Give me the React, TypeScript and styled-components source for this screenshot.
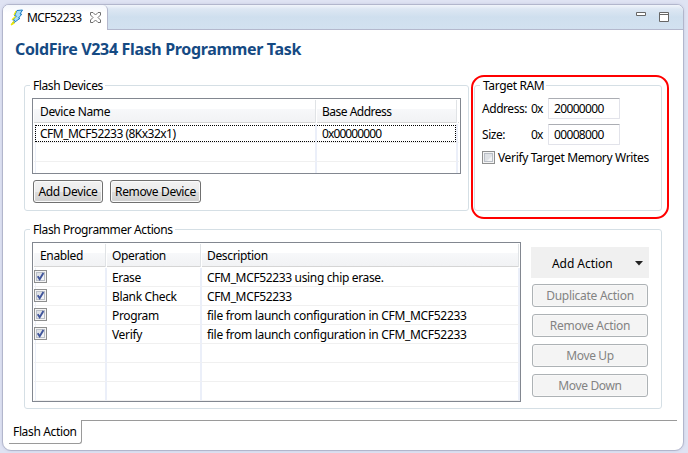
import React from "react";
import styled, { createGlobalStyle } from "styled-components";

const Global = createGlobalStyle`
  *{box-sizing:border-box}
  html,body{margin:0;padding:0}
  body{width:688px;height:453px;overflow:hidden;background:#e0e4f4;font:12px/16px "Noto Sans","Open Sans",sans-serif;color:#000}
`;
const T = styled.span<{ $s?: number }>`
  white-space:pre;letter-spacing:${p => p.$s ?? -0.35}px;
`;
const Page = styled.div`width:688px;height:453px;padding:4px 4px 2px 2px;background:#dfe3f3;`;
const Window = styled.div`
  position:relative;width:682px;height:447px;border:1px solid #b2b6cc;border-radius:7px 7px 9px 9px;background:#fff;overflow:hidden;
  display:flex;flex-direction:column;box-shadow:0 0 3px #c5c9e0;
`;
const TabBar = styled.div`
  height:25px;flex:none;display:flex;border-bottom:1px solid #b4b8cd;
  background:linear-gradient(#f1f5fb 0,#dde7f3 4px,#cfdfee 12px,#d2e1f0 100%);
`;
const Tab = styled.div`
  width:105px;height:25px;background:linear-gradient(#f4f7fc,#fff 8px);border-right:1px solid #b4b8cd;border-radius:0 5px 0 0;
  display:flex;align-items:center;padding:0 0 0 7px;
  svg{flex:none}
`;
const TabName = styled.div`width:65px;padding-left:2px;height:17px;line-height:18px;`;
const WinButtons = styled.div`margin-left:auto;padding:7px 14px 0 0;svg{display:block}`;
const Title = styled.h1`
  margin:0;height:47px;padding:8px 0 0 12px;font-size:16px;line-height:22px;font-weight:700;color:#154a83;
`;
const Row = styled.div<{ $h: number }>`height:${p => p.$h}px;display:flex;flex:none;`;
const Group = styled.fieldset<{ $w: number; $h: number; $ml: number }>`
  margin:0 0 0 ${p => p.$ml}px;padding:0;width:${p => p.$w}px;height:${p => p.$h}px;border:1px solid #d5dfe5;border-radius:3px;min-width:0;flex:none;
`;
const Legend = styled.legend`margin-left:5px;padding:0 2px 0 3px;height:16px;line-height:18px;`;
const Table = styled.div<{ $w: number; $h: number; $cols: string }>`
  width:${p => p.$w}px;height:${p => p.$h}px;border:1px solid #828790;padding:1px 1px 0;flex:none;overflow:hidden;
  display:grid;grid-template-columns:${p => p.$cols};grid-auto-rows:19px;grid-template-rows:24px;
`;
const Head = styled.div<{ $first?: boolean }>`
  margin:0 1px 1px 0;border-right:1px solid #e0e3e6;padding:4px 0 0 ${p => (p.$first ? 6 : 5)}px;
  background:linear-gradient(#fff 0,#fff 9px,#f7f8fa 9px,#f1f2f4 100%);
  box-shadow:1px 0 0 #fff,inset 0 -1px 0 #d5d5d5;
`;
const HeadEnd = styled.div`
  margin-bottom:1px;border-bottom:1px solid #d5d5d5;
`;
const Cell = styled.div<{ $first?: boolean; $flush?: boolean }>`
  border-right:2px solid #ebeff9;border-bottom:1px solid #f0f0f0;padding:2px 0 0 ${p => (p.$flush ? 0 : 5)}px;
  ${p => p.$flush && "padding-top:1px;"}
  ${p => p.$first && "padding:1px 0 0;background:linear-gradient(90deg,transparent 1px,#ebeff9 1px,#ebeff9 2px,transparent 2px);"}
  svg{display:block;margin-top:1px}
`;
const EndCell = styled.div`border-bottom:1px solid #f0f0f0;`;
const Selected = styled.div<{ $end?: boolean }>`
  height:17px;border:1px dotted #000;padding-left:4px;line-height:15px;
  ${p => (p.$end ? "border-left:0;padding-left:5px;" : "border-right:0;margin-left:1px;")}
`;
const Button = styled.div<{ $w: number; $off?: boolean }>`
  width:${p => p.$w}px;height:23px;border:1px solid ${p => (p.$off ? "#adb2b5" : "#707070")};border-radius:3px;
  background:${p => (p.$off ? "#f4f4f4" : "linear-gradient(#f2f2f2 0,#ebebeb 50%,#dddddd 50%,#cfcfcf 100%)")};
  box-shadow:inset 0 0 0 1px ${p => (p.$off ? "#f8f8f8" : "#fafafa")};
  color:${p => (p.$off ? "#838383" : "#000")};display:flex;justify-content:center;align-items:center;flex:none;
`;
const Buttons = styled.div`display:flex;gap:7px;padding:6px 0 0 1px;`;
const Side = styled.div`display:flex;flex-direction:column;align-items:center;gap:7px;width:118px;margin:5px 0 0 10px;`;
const AddAction = styled.div`
  width:118px;height:31px;margin-bottom:-1px;background:#f0f0f0;display:flex;align-items:center;padding:3px 6px 0 21px;justify-content:space-between;
  svg{margin-bottom:2px}
`;
const Field = styled.div`display:grid;grid-template-columns:49px 17px 72px;height:26px;padding-left:7px;line-height:22px;`;
const Input = styled.div`height:21px;border:1px solid #e2e3ea;border-top-color:#abadb3;border-radius:1px;padding-left:5px;line-height:20px;`;
const Check = styled.div`display:flex;gap:3px;padding:0 0 0 7px;margin-top:1px;line-height:14px;svg{flex:none}`;
const Body = styled.div`padding:5px 0 0 7px;`;
const RamBody = styled.div`padding-top:5px;`;
const Callout = styled.div`
  position:absolute;left:468px;top:70px;width:198px;height:144px;border:2px solid #f00;border-radius:13px;
`;
const Footer = styled.div`display:flex;height:24px;margin:11px 6px 0 6px;`;
const PageTab = styled.div`width:73px;height:24px;border:1px solid #9a9a9a;border-top:0;border-left:0;border-radius:0 0 3px 0;padding:4px 0 0 4px;`;
const Line = styled.div`flex:1;border-top:1px solid #9a9a9a;`;

const Box = ({ on }: { on?: boolean }) => (
  <svg width="13" height="13" viewBox="0 0 13 13">
    <rect x=".5" y=".5" width="12" height="12" fill="#f4f4f4" stroke="#8e8f8f" />
    <rect x="2.5" y="2.5" width="8" height="8" fill="#dfe2e6" stroke="#b9bec6" />
    <path d="M5 10h5V5z" fill="#f3f4f5" />
    {on && <path d="M3.700 6.300l2 2.900L9.400 3" fill="none" stroke="#40559b" strokeWidth="1.900" />}
  </svg>
);
const Bolt = () => (
  <svg width="15" height="17" viewBox="0 0 15 17">
    <path d="M7 1.500l5.500-.5-2.500 4 1.800.2-3.300 3.800 1.500.3L1.500 15.500l3.200-4.300-2-.2 3.700-4-1.900-.3z" fill="#a6dcf7" stroke="#1c7cc4" />
    <path d="M6 2L4 6M5.500 7.500L2 10.800M4 12L1 16l3.500-2" fill="none" stroke="#f0ea00" strokeWidth="1.200" />
  </svg>
);

const actions = [
  ["Erase", "CFM_MCF52233 using chip erase."],
  ["Blank Check", "CFM_MCF52233"],
  ["Program", "file from launch configuration in CFM_MCF52233"],
  ["Verify", "file from launch configuration in CFM_MCF52233"],
  ["", ""], ["", ""], ["", ""],
];

export default function App() {
  return (
    <Page>
      <Global />
      <Window>
        <TabBar>
          <Tab>
            <Bolt />
            <TabName><T $s={-0.55}>MCF52233</T></TabName>
            <svg width="11" height="11" viewBox="0 0 11 11">
              <path d="M.5.5h2.500L5.500 3 8 .5h2.500V3L8 5.500 10.500 8v2.500H8L5.500 8 3 10.500H.5V8L3 5.500.5 3z" fill="#fff" stroke="#707070" />
            </svg>
          </Tab>
          <WinButtons>
            <svg width="33" height="11" viewBox="0 0 33 11">
              <path d="M.5.5h9v3h-9zM23.500.5h9v9h-9zM23.500 2.500h9" fill="#fff" stroke="#666" />
            </svg>
          </WinButtons>
        </TabBar>
        <Title><T $s={-0.34}>ColdFire V234 Flash Programmer Task</T></Title>
        <Row $h={144}>
          <Group $w={445} $h={134} $ml={21}>
            <Legend><T $s={-0.4}>Flash Devices</T></Legend>
            <Body>
              <Table $w={429} $h={76} $cols="283px 141px 1fr">
                <Head $first><T>Device Name</T></Head><Head><T $s={-0.5}>Base Address</T></Head><HeadEnd />
                <Cell $first><Selected><T $s={-0.52}>CFM_MCF52233 (8Kx32x1)</T></Selected></Cell>
                <Cell $flush><Selected $end><T $s={-0.9}>0x00000000</T></Selected></Cell><EndCell />
                <Cell $first /><Cell /><EndCell />
                <Cell $first /><Cell /><EndCell />
              </Table>
              <Buttons>
                <Button $w={70}><T>Add Device</T></Button>
                <Button $w={91}><T>Remove Device</T></Button>
              </Buttons>
            </Body>
          </Group>
          <Group $w={188} $h={134} $ml={5}>
            <Legend><T>Target RAM</T></Legend>
            <RamBody>
              <Field><T $s={-0.45}>Address:</T><T $s={-0.8}>0x</T><Input><T $s={-0.65}>20000000</T></Input></Field>
              <Field><T $s={-0.45}>Size:</T><T $s={-0.8}>0x</T><Input><T $s={-0.65}>00008000</T></Input></Field>
              <Check><Box /><T>Verify Target Memory Writes</T></Check>
            </RamBody>
          </Group>
        </Row>
        <Row $h={188}>
          <Group $w={638} $h={188} $ml={21}>
            <Legend><T $s={-0.39}>Flash Programmer Actions</T></Legend>
            <Body>
              <Row $h={160}>
                <Table $w={489} $h={160} $cols="73px 95px 318px 1fr">
                  <Head $first><T>Enabled</T></Head><Head><T>Operation</T></Head><Head><T>Description</T></Head><HeadEnd />
                  {actions.map(([a, b], i) => (
                    <React.Fragment key={i}>
                      <Cell $first>{a && <Box on />}</Cell>
                      <Cell><T>{a}</T></Cell><Cell><T $s={b.startsWith("file") ? -0.3 : -0.35}>{b}</T></Cell><EndCell />
                    </React.Fragment>
                  ))}
                </Table>
                <Side>
                  <AddAction><T $s={-0.05}>Add Action</T><svg width="8" height="5"><path d="M0 0h8L4 4.500z" fill="#222" /></svg></AddAction>
                  <Button $off $w={116}><T $s={-0.27}>Duplicate Action</T></Button>
                  <Button $off $w={116}><T $s={-0.27}>Remove Action</T></Button>
                  <Button $off $w={116}><T>Move Up</T></Button>
                  <Button $off $w={116}><T>Move Down</T></Button>
                </Side>
              </Row>
            </Body>
          </Group>
        </Row>
        <Footer><PageTab><T>Flash Action</T></PageTab><Line /></Footer>
        <Callout />
      </Window>
    </Page>
  );
}
